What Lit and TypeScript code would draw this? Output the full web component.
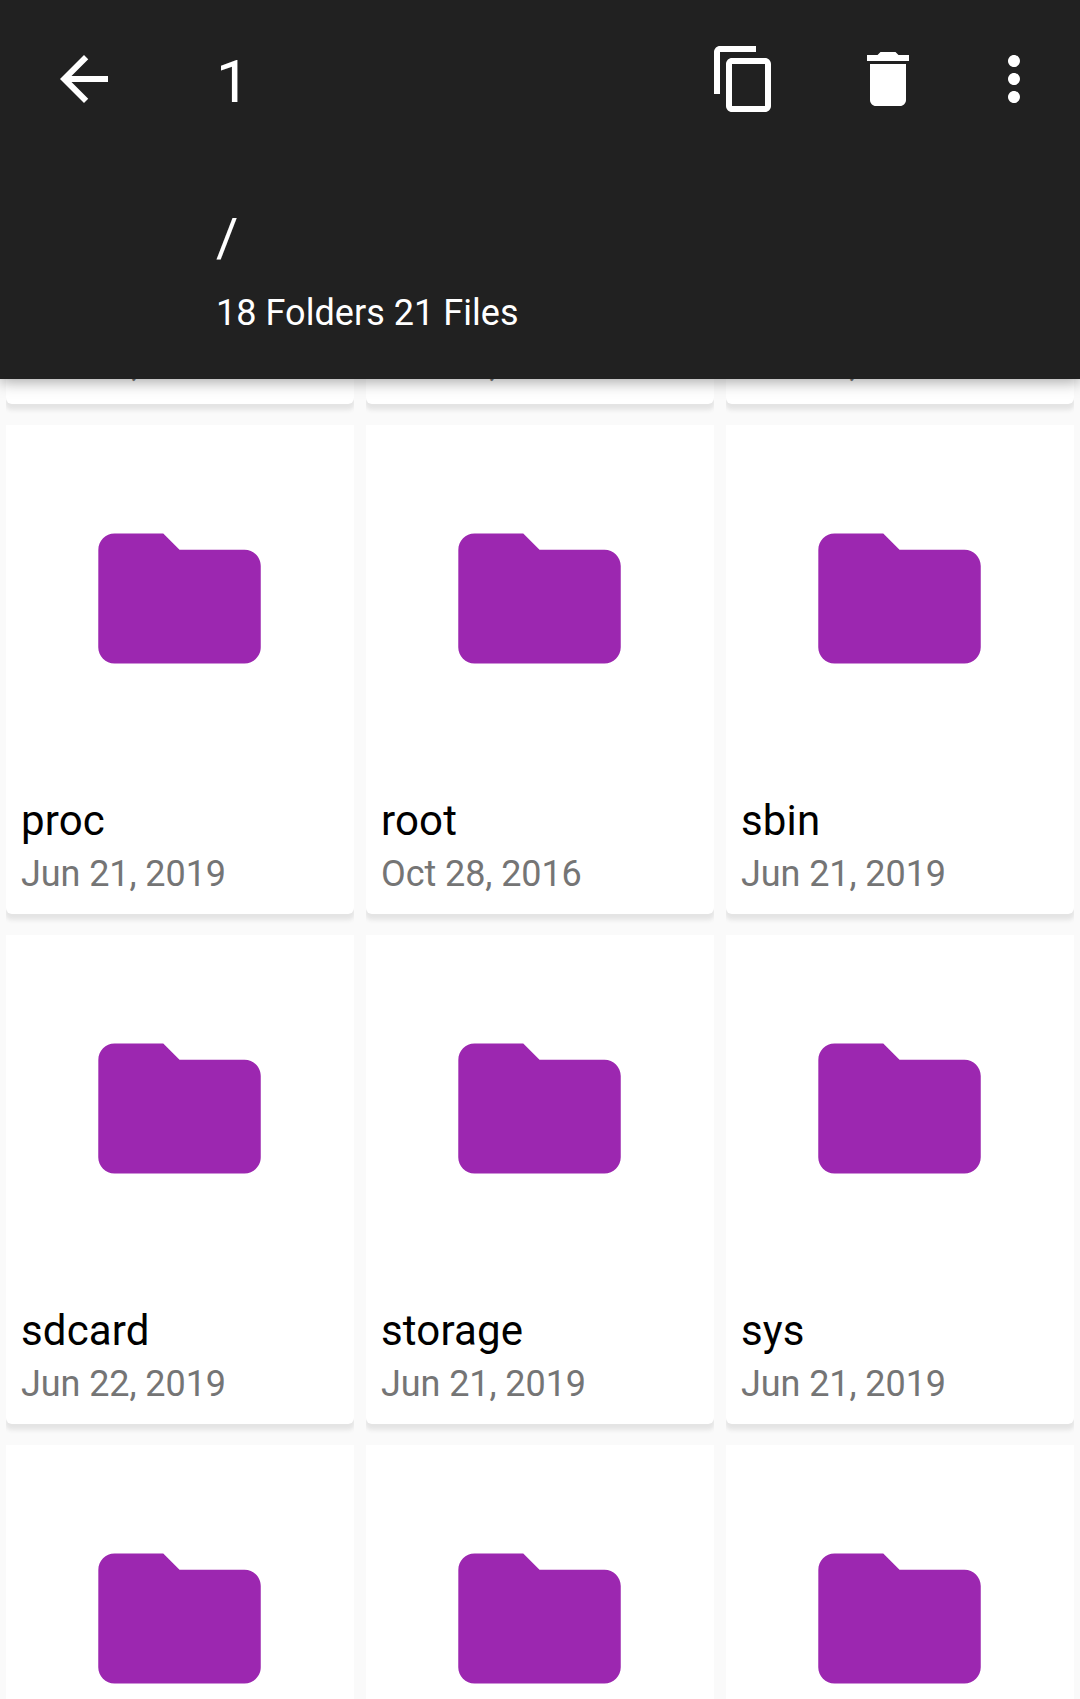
import { LitElement, html, css, svg } from "lit";
import { customElement, property } from "lit/decorators.js";

const ICONS = {
  back: svg`<path d="M20 11H7.83l5.59-5.59L12 4l-8 8 8 8 1.41-1.41L7.83 13H20v-2z"/>`,
  copy: svg`<path d="M16 1H4c-1.1 0-2 .9-2 2v14h2V3h12V1zm3 4H8c-1.1 0-2 .9-2 2v14c0 1.1.9 2 2 2h11c1.1 0 2-.9 2-2V7c0-1.1-.9-2-2-2zm0 16H8V7h11v14z"/>`,
  trash: svg`<path d="M6 19c0 1.1.9 2 2 2h8c1.1 0 2-.9 2-2V7H6v12zM19 4h-3.5l-1-1h-5l-1 1H5v2h14V4z"/>`,
  more: svg`<path d="M12 8c1.1 0 2-.9 2-2s-.9-2-2-2-2 .9-2 2 .9 2 2 2zm0 2c-1.1 0-2 .9-2 2s.9 2 2 2 2-.9 2-2-.9-2-2-2zm0 6c-1.1 0-2 .9-2 2s.9 2 2 2 2-.9 2-2-.9-2-2-2z"/>`,
  folder: svg`<path d="M10 4H4c-1.1 0-1.99.9-1.99 2L2 18c0 1.1.9 2 2 2h16c1.1 0 2-.9 2-2V8c0-1.1-.9-2-2-2h-8l-2-2z"/>`,
};

interface Entry {
  name: string;
  date: string;
}

const ENTRIES: Entry[] = [
  { name: "", date: "Dec 31, 1969" },
  { name: "", date: "Jun 21, 2019" },
  { name: "", date: "Jun 21, 2019" },
  { name: "proc", date: "Jun 21, 2019" },
  { name: "root", date: "Oct 28, 2016" },
  { name: "sbin", date: "Jun 21, 2019" },
  { name: "sdcard", date: "Jun 22, 2019" },
  { name: "storage", date: "Jun 21, 2019" },
  { name: "sys", date: "Jun 21, 2019" },
  { name: "", date: "" },
  { name: "", date: "" },
  { name: "", date: "" },
];

@customElement("app-icon")
class AppIcon extends LitElement {
  @property() name: keyof typeof ICONS = "back";
  static styles = css`
    :host { display: block; width: 72px; height: 72px; }
    svg { display: block; width: 100%; height: 100%; fill: currentColor; }
  `;
  render() {
    return html`<svg viewBox="0 0 24 24">${ICONS[this.name]}</svg>`;
  }
}

@customElement("folder-card")
class FolderCard extends LitElement {
  @property() name = "";
  @property() date = "";
  static styles = css`
    /* The shadow only shows below the card; top and sides are clipped. */
    :host { display: block; height: 510px; overflow: hidden; }
    .card {
      box-sizing: border-box;
      height: 489px;
      background: #fff;
      border-radius: 0 0 6px 6px;
      box-shadow: 0 5px 4px 1px #e4e4e4;
      display: flex;
      flex-direction: column;
    }
    .thumb {
      box-sizing: border-box;
      height: 347px;
      padding-right: 1px;
      display: flex;
      align-items: center;
      justify-content: center;
      color: #9c27b0;
    }
    .thumb app-icon { width: 195px; height: 195px; }
    .meta { padding: 22px 15px 0; white-space: nowrap; }
    .name { height: 54px; font-size: 42px; line-height: 54px; letter-spacing: 0.15px; color: #000; }
    .date { height: 52px; font-size: 36px; line-height: 52px; letter-spacing: -0.08px; color: #757575; }
  `;
  render() {
    return html`<div class="card">
      <div class="thumb"><app-icon name="folder"></app-icon></div>
      <div class="meta">
        <div class="name">${this.name}</div>
        <div class="date">${this.date}</div>
      </div>
    </div>`;
  }
}

@customElement("app-root")
class AppRoot extends LitElement {
  static styles = css`
    :host {
      display: flex;
      flex-direction: column;
      height: 1699px;
      overflow: hidden;
      background: #fafafa;
      font-family: Roboto, sans-serif;
    }
    header {
      position: relative;
      z-index: 1;
      flex: none;
      box-sizing: border-box;
      height: 379px;
      background: #212121;
      color: #fff;
      box-shadow: 0 3px 14px rgba(0, 0, 0, 0.35);
    }
    .bar { display: flex; align-items: center; height: 158px; padding: 0 30px 0 48px; }
    .count { flex: 1; padding: 6px 0 0 96px; font-size: 60px; line-height: 72px; }
    .actions { display: flex; }
    .copy { margin-right: 72px; }
    .trash { margin-right: 54px; }
    .summary { padding: 47px 0 0 216px; }
    .path { font-size: 54px; line-height: 66px; }
    .totals { font-size: 36px; line-height: 48px; padding-top: 18px; letter-spacing: 0.04px; }
    .list { flex: 1; min-height: 0; overflow: hidden; }
    .grid {
      display: grid;
      grid-template-columns: repeat(3, 348px);
      column-gap: 12px;
      padding: 0 6px;
      margin-top: -464px;
    }
  `;
  render() {
    return html`
      <header>
        <div class="bar">
          <app-icon name="back"></app-icon>
          <div class="count">1</div>
          <div class="actions">
            <app-icon class="copy" name="copy"></app-icon>
            <app-icon class="trash" name="trash"></app-icon>
            <app-icon name="more"></app-icon>
          </div>
        </div>
        <div class="summary">
          <div class="path">/</div>
          <div class="totals">18 Folders 21 Files</div>
        </div>
      </header>
      <div class="list">
        <div class="grid">
          ${ENTRIES.map((e) => html`<folder-card .name=${e.name} .date=${e.date}></folder-card>`)}
        </div>
      </div>
    `;
  }
}
